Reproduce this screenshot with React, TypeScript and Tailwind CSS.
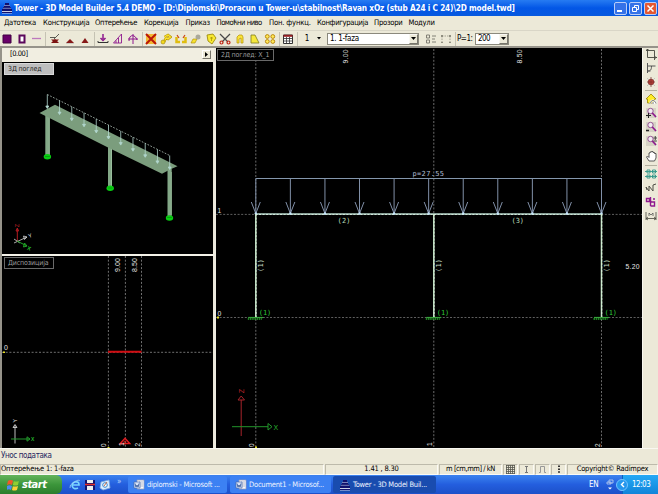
import React from "react";

const UI = "font-['DejaVu_Sans_Condensed','DejaVu_Sans',sans-serif]";

function Icon({ children, w = 12 }: { children: React.ReactNode; w?: number }) {
  return (
    <svg width={w} height={12} viewBox={`0 0 ${w} 12`} fill="none" className="block shrink-0">
      {children}
    </svg>
  );
}

function Sep({ className = "w-[3px]" }: { className?: string }) {
  return (
    <div className={`${className} flex h-[14px] justify-center`}>
      <div className="h-full w-px bg-[#c5c2b3]" />
    </div>
  );
}

const menu: [string, string, string][] = [
  ["Датотека", "w-[39px]", "tracking-[-0.3px]"],
  ["Конструкција", "w-[52px]", "tracking-[-0.2px]"],
  ["Оптерећење", "w-[49px]", "tracking-[-0.34px]"],
  ["Корекција", "w-[41.5px]", "tracking-[-0.27px]"],
  ["Приказ", "w-[31px]", "tracking-[-0.25px]"],
  ["Помоћни ниво", "w-[52.5px]", "tracking-[-0.5px]"],
  ["Пон. функц.", "w-[48px]", "tracking-[-0.15px]"],
  ["Конфигурација", "w-[57px]", "tracking-[-0.3px]"],
  ["Прозори", "w-[34.5px]", "tracking-[-0.25px]"],
  ["Модули", "w-[30px]", "tracking-[-0.25px]"],
];

const P = "#8e188e";
const toolbarGroups: React.ReactNode[][] = [
  [
    <path d="M2 2h8v8H2z" fill="#690069" stroke="#400040" />,
    <path d="M3.500 2.500h5v7h-5z" fill="#fff" stroke="#5b075b" strokeWidth="2" />,
    <path d="M2 5.500h9" stroke="#bd78bd" strokeWidth="1.300" />,
  ],
  [
    <><path d="M1 4.500h6M5 6l5-5" stroke="#5c5c54" /><path d="M2 6.500h8L6 10z" fill="#7c1212" /><path d="M6 6l4 4H2z" fill="#7c1212" /></>,
    <><path d="M6 6l4 4H2z" fill="#861818" /><path d="M2 10.500h8" stroke="#aaa" strokeWidth=".5" /></>,
    <path d="M6 5l3.500 5h-7z" fill="#861818" />,
  ],
  [
    <><path d="M6 1v5M3.500 5L6 7.500 8.500 5" stroke={P} strokeWidth="1.500" /><path d="M1 8v1.500h10V8" stroke="#333" /></>,
    <path d="M1.500 10h8V1zM4 10V7.500M6.500 10V5" stroke={P} strokeWidth=".9" />,
    <><path d="M6 1v10M1 6h10" stroke={P} /><path d="M2 8c0-8 7-6 8-1" stroke={P} /></>,
  ],
  [
    <><path d="M1 1h10v10H1z" fill="#f5b832" /><path d="M1 1l10 10M11 1L1 11" stroke="#b91608" strokeWidth="2" /></>,
    <><path d="M4.500 4L8 2l2.500 2L8 6 6 5 4 9" stroke="#b69700" strokeWidth="2.500" /><path d="M4.500 4L8 2l2.500 2L8 6 6 5 4 9" stroke="#ffe52d" strokeWidth="1.200" /><circle cx="3" cy="9" r="2" fill="#f2d81e" stroke="#8d7000" strokeWidth=".5" /></>,
    <><path d="M1.500 4v5h3.500M10.500 4v5H7" stroke="#e0bd10" strokeWidth="2.500" /><path d="M2 2l2 3M10 2L8 5" stroke="#cb4410" strokeWidth="1.200" /></>,
    <><path d="M1 10l2-4h4l-2 4z" fill="#f7e12f" stroke="#a58800" strokeWidth=".6" /><circle cx="8" cy="4" r="2.500" fill="#aaa99a" /></>,
    <><path d="M2 2l6-1 3 4-4 6-4-3z" fill="#f8e832" stroke="#938200" strokeWidth=".8" /><path d="M5 5h3M6.500 4v4" stroke="#a28c00" strokeWidth=".7" /></>,
    <><path d="M1 1l8 8M11 1L3 9" stroke="#484848" strokeWidth="1.200" /><circle cx="2.500" cy="9.500" r="1.500" stroke="#c22314" strokeWidth="1.200" /><circle cx="9.500" cy="9.500" r="1.500" stroke="#c22314" strokeWidth="1.200" /></>,
    <path d="M3 10V4l2-2h3l1 2v6H7V5L5 6v4z" fill="#fae43a" stroke="#b49100" strokeWidth=".7" />,
    <path d="M2 10V2h4l4 8z" fill="#f6e83c" stroke="#7d7a20" strokeWidth=".8" />,
    <g fill="#ffe958" stroke="#b27d00" strokeWidth=".9"><circle cx="3.300" cy="3.500" r="1.900" /><circle cx="8.800" cy="3.500" r="1.900" /><circle cx="3.300" cy="8.500" r="1.900" /><circle cx="8.800" cy="8.500" r="1.900" /></g>,
  ],
  [
    <><path d="M1.500 2h9v8.500h-9z" fill="#fff" stroke="#333" /><path d="M1.500 2.800h9" stroke="#941d20" strokeWidth="2" /><path d="M1.500 5.500h9M1.500 8h9M4.500 4v6M7.500 4v6" stroke="#333" strokeWidth=".8" /></>,
  ],
];

function ToolGroup({ items, cell }: { items: React.ReactNode[]; cell: string }) {
  return (
    <div className="flex">
      {items.map((it, i) => (
        <div key={i} className={`${cell} flex justify-center`}>
          <Icon>{it}</Icon>
        </div>
      ))}
    </div>
  );
}

const glass = (
  <>
    <path d="M1 1h10v10H1z" fill="#d6d3c5" />
    <circle cx="5.500" cy="4" r="2.700" fill="#f3eef2" stroke="#8c448c" strokeWidth=".9" />
    <path d="M7.300 6L11 10" stroke={P} strokeWidth="1.700" />
  </>
);

const sideIcons: React.ReactNode[] = [
  <path d="M2.500 1v8.500H12M1 2.500h8.500V12M1.500 2l1-1 1 1M10.500 8.500l1 1-1 1" stroke="#45453d" strokeWidth=".9" />,
  <path d="M2.500 1v10M2.500 4h8M2.500 9c3 0 4-1 4-5M2.500 9h3" stroke="#555" strokeWidth="1" />,
  <><path d="M2 2l8 8M10 2L2 10" stroke="#aaa" strokeWidth=".6" /><circle cx="6" cy="6" r="2.800" fill="#be4138" stroke="#802c28" strokeWidth=".8" /><path d="M6 1v10M2 6h8" stroke="#762d28" strokeWidth=".7" /></>,
  <><path d="M1 6l5-5 5 5H9.500v4H2.500V6z" fill="#ffec26" stroke="#958300" strokeWidth=".8" /><path d="M5 10.500c1-4 5-4 6 0M7 10h3" stroke="#fff" strokeWidth="1.800" /><path d="M5 10.500c1-4 5-4 6 0M8 9v2" stroke="#555" strokeWidth=".8" /></>,
  <>{glass}<path d="M1 8.500h5M3.500 6v5" stroke="#222" strokeWidth="1" /></>,
  <>{glass}<path d="M1 9.500h3" stroke="#222" strokeWidth="1.500" /></>,
  <>{glass}<path d="M8.500 3H12M10.300 1v4M8.500 6H12" stroke="#333" strokeWidth=".8" /></>,
  <path d="M4 11L1.500 7l1-1L4 7.500V3h1V2h1.500V1.500H8V2.500h1.500v1H11V8l-1.500 3z" fill="#fff" stroke="#484848" strokeWidth=".9" />,
  <path d="M2 2h3v3H2zM7.500 2h3v3h-3zM2 7h3v3H2zM7.500 7h3v3h-3zM0 3.500h12M0 8.500h12" stroke="#30968a" strokeWidth=".9" />,
  <path d="M1 5l3 4V4l4 5V3l3-1M1 5l1 3" stroke="#4e4e46" strokeWidth="1" />,
  <path d="M1.500 2.500h3v3h-3zM5.500 1v9M5.500 6h4v4h-4M4.500 5.500h2M8 3h2" stroke={P} strokeWidth="1.400" />,
  <><path d="M1 2v8M11 2v8M1 8.500h10M3 7L1 8.500 3 10M9 7l2 1.500L9 10" stroke="#48483f" strokeWidth=".8" /><path d="M4 6V3l2 2 2-2v3" stroke="#555" strokeWidth=".8" /></>,
];

const gap = [0, 2, 2, 5, 2, 2, 2, 3, 6, 2, 2, 2];

function SideBar() {
  return (
    <div className="flex w-[16px] shrink-0 flex-col items-center border-l border-[#f8f7ef] bg-[#ece9d8]">
      {sideIcons.map((ic, i) => (
        <React.Fragment key={i}>
          {gap[i] >= 5 ? (
            <div className="flex w-[12px] flex-col justify-center" style={{ height: gap[i] }}>
              <div className="h-px bg-[#b4b1a1]" />
            </div>
          ) : (
            <div style={{ height: gap[i] }} />
          )}
          <Icon>{ic}</Icon>
        </React.Fragment>
      ))}
    </div>
  );
}

function View3D() {
  return (
    <svg width="211" height="192" viewBox="2 62 211 192" className="block bg-black">
      <g fill="#83a887">
        <path d="M45.300 115h4.400v41h-4.400zM108 145h4v43h-4zM167.500 168h4.200v48h-4.200z" />
      </g>
      <path d="M49.300 116v39M111.500 146v40M171.300 172v43" stroke="#a5c9a8" strokeWidth=".7" />
      <path d="M39.500 113L55 104.800 177.500 166.300 170 169.500 162 173.800 109 148z" fill="#7b9d7d" />
      <path d="M47.300 94.500L169.700 155.500" stroke="#b5c4bb" strokeWidth=".8" strokeDasharray="1.700 1.500" />
      {Array.from({ length: 11 }, (_, i) => {
        const x = 47.3 + i * 12.24;
        const y = 94.5 + i * 6.1;
        return (
          <g key={i} stroke="#b3d7ce" strokeWidth=".8">
            <path d={`M${x} ${y}v13`} />
            <path d={`M${x - 1.5} ${y + 11.5}l1.500 2.500 1.500-2.500z`} fill="#aed6ce" />
          </g>
        );
      })}
      <g fill="#08ce12">
        <ellipse cx="47.400" cy="156.800" rx="3.700" ry="2.700" />
        <ellipse cx="110.200" cy="188.300" rx="3.700" ry="2.700" />
        <ellipse cx="169.500" cy="218" rx="3.700" ry="2.700" />
      </g>
      <path d="M45 156.500h5M108 188h4.500M167 217.500h5" stroke="#08970d" strokeWidth=".8" />
      <path d="M17.300 242v-13M16 231l1.300-3 1.300 3z" stroke="#b31b21" strokeWidth="1" fill="none" />
      <path d="M14 243l13-6M23.500 236l3.500 1-2.500 2.500zM14 239l6 4" stroke="#d5d5d5" strokeWidth=".8" fill="none" />
      <path d="M17 241l10 5M24.500 243l2.500 3-3.500 1z" stroke="#20a527" strokeWidth="1" fill="none" />
      <g fontFamily="Liberation Sans, sans-serif" fontSize="5.500">
        <text transform="translate(19 227.300) rotate(-90)" fill="#d2262c">Z</text>
        <text x="28" y="237.500" fill="#e1e1e1" transform="rotate(-20 30 235)">Y</text>
        <text x="27.500" y="250.500" fill="#22b42a" fontWeight="bold" transform="rotate(20 30 248)">X</text>
      </g>
    </svg>
  );
}

function ViewPlan() {
  return (
    <svg width="211" height="192" viewBox="2 256 211 192" className="block bg-black">
      <g stroke="#8d8d8d" strokeWidth=".8" strokeDasharray="2 1.700">
        <path d="M108.400 256v192M125.400 256v192M141.500 256v192" />
        <path d="M2 352.300h211" />
      </g>
      <path d="M108 351.800h33.500" stroke="#d00d12" strokeWidth="1.900" />
      <path d="M120.200 443.500h9.600l-4.800-5.300z" stroke="#e21b20" strokeWidth="1.400" fill="none" />
      <path d="M123.500 441.500h3M125 440v3" stroke="#ce2020" strokeWidth=".7" />
      <path d="M15 443.500v-18M13 427.500l2-3 2 3z" stroke="#d1d1d1" strokeWidth=".9" fill="none" />
      <path d="M11 439h19M27 436.800l3 2.200-3 2.200z" stroke="#239a2c" strokeWidth="1" fill="none" />
      <path d="M3 351.500h2v1.500H3zM107.500 447h2v1h-2z" fill="#e8df26" />
      <g fontFamily="Liberation Sans, sans-serif" fontSize="7" fill="#e6e6e6">
        <text x="4" y="350">0</text>
        <text x="31" y="441" fontSize="5" fill="#23b12a" fontWeight="bold">X</text>
        <text transform="translate(17 422.500) rotate(-90)" fontSize="5">Y</text>
        <text transform="translate(120 272) rotate(-90)" textLength="14">9.00</text>
        <text transform="translate(136.500 272) rotate(-90)" textLength="14">8.50</text>
        <text transform="translate(106 447) rotate(-90)" fontSize="6.500">0</text>
        <text transform="translate(123.500 446) rotate(-90)" fontSize="6.500">1</text>
        <text transform="translate(139.800 446.500) rotate(-90)" fontSize="6.500">2</text>
      </g>
    </svg>
  );
}

const columns = [255.8, 433.8, 601.5];

function ViewFrame() {
  return (
    <svg width="426" height="400" viewBox="216 48 426 400" className="block bg-black">
      <g stroke="#777" strokeWidth=".9" strokeDasharray="2 1.600">
        {columns.map((x) => (
          <path key={x} d={`M${x} 49v399`} />
        ))}
        <path d="M216 214.400h426M216 317.500h426" strokeWidth=".8" />
      </g>
      <path d="M255.800 178.500H602" stroke="#8497ad" strokeWidth="1" />
      <g stroke="#8190a8" strokeWidth="1" fill="none">
        {Array.from({ length: 11 }, (_, i) => {
          const x = 255.8 + i * 34.57;
          return <path key={i} d={`M${x} 178.500v35M${x - 4.5} 202l4.500 11.500 4.500-11.500`} />;
        })}
      </g>
      <path d="M255.500 214H602" stroke="#b5d5c8" strokeWidth="1.500" />
      <path d="M255.500 214.500H602" stroke="#e9fff1" strokeWidth=".7" strokeDasharray="2 1.500" />
      {Array.from({ length: 11 }, (_, i) => (
        <circle key={i} cx={255.8 + i * 34.57} cy="213.500" r="1.200" fill="#c6e5fc" />
      ))}
      {columns.map((x) => (
        <g key={x}>
          <path d={`M${x} 214v103`} stroke="#c4e6c7" strokeWidth="1.500" />
          <path d={`M${x + 0.4} 214v103`} stroke="#f5fff5" strokeWidth=".6" strokeDasharray="2 1.500" />
          <path d={`M${x - 7.5} 317.500h15`} stroke="#36a43a" strokeWidth="1.200" />
          <path d={`M${x - 8} 319h14`} stroke="#28a52d" strokeWidth="1.400" strokeDasharray="1.500 .7" />
        </g>
      ))}
      <g fontFamily="DejaVu Sans Mono, Liberation Mono, monospace" fontSize="7">
        <text x="412.500" y="176" textLength="31.500" fill="#b0bdd3">p=27.55</text>
        <text x="337.500" y="222.500" textLength="13" fill="#b9dcb9">(2)</text>
        <text x="511.500" y="222.500" textLength="12.500" fill="#b9dcb9">(3)</text>
        {columns.map((x) => (
          <React.Fragment key={x}>
            <text transform={`translate(${x + 7.6} 272) rotate(-90)`} textLength="13" fill="#c6dcc6">(1)</text>
            <text x={x + 3} y="315.300" textLength="12.500" fill="#2dc837">(1)</text>
          </React.Fragment>
        ))}
      </g>
      <g fontFamily="Liberation Sans, sans-serif" fontSize="6.800" fill="#e6e6e6">
        <text transform="translate(348 63.500) rotate(-90)" textLength="14">9.00</text>
        <text transform="translate(521.500 63.500) rotate(-90)" textLength="14">8.50</text>
        <text x="217.500" y="212.500" fontSize="6.500">1</text>
        <text x="217.500" y="315.500">0</text>
        <text x="625.500" y="269" textLength="14">5.20</text>
        <text transform="translate(254 447) rotate(-90)" fontSize="6.500">0</text>
        <text transform="translate(431.500 446) rotate(-90)" fontSize="6.500">1</text>
        <text transform="translate(600 447) rotate(-90)" fontSize="6.500">2</text>
        <text x="273.500" y="429.500" fontSize="7" fill="#28b42f">X</text>
        <text transform="translate(244.300 393.300) rotate(-90)" fontSize="7" fill="#c1252b">Z</text>
      </g>
      <path d="M241.200 436v-36M238 400h6.500l-3.300-4z" stroke="#a6242a" strokeWidth="1" fill="none" />
      <path d="M232 426.700h36M268 423.500v6.500l4-3.300z" stroke="#22942b" strokeWidth="1" fill="none" />
      <path d="M217 316.500h2v2h-2zM255 446.500h2v1.500h-2z" fill="#e5de26" />
    </svg>
  );
}

function ViewLabel({ text, active, className }: { text: string; active?: boolean; className: string }) {
  return (
    <div
      className={`absolute flex h-[12px] items-center border pl-[3px] text-[7px] leading-none tracking-[-0.12px] whitespace-nowrap ${
        active ? "border-[#d9d9d9] bg-[#bebebe] text-[#222]" : "border-[#696969] bg-black text-[#9d9d9d]"
      } ${className}`}
    >
      {text}
    </div>
  );
}

function Tower({ s = 12 }: { s?: number }) {
  return (
    <svg width={s} height={s} viewBox="0 0 12 12" className="block shrink-0">
      <path d="M1 8h10v3.500H1z" fill="#c9cfe6" />
      <path d="M4 1h4v2h1v2h1v2h1v2H1V7h1V5h1V3h1zM1 10h10v1H1z" fill="#10106e" />
      <path d="M3 3.500h6M2 6.300h8" stroke="#a9b2d8" strokeWidth=".7" />
    </svg>
  );
}

function DocIcon() {
  return (
    <Icon>
      <path d="M4 1h7v9H4z" fill="#f7f8fc" stroke="#999fb5" strokeWidth=".7" />
      <path d="M6 3h4M7 5h3M7 7h3" stroke="#99a4bd" strokeWidth=".7" />
      <path d="M1 3h6v6H1z" fill="#dae5f9" stroke="#496aab" strokeWidth=".7" />
      <path d="M2 4.500L3 8l1-2 1 2 1-3.500" stroke="#385c9d" strokeWidth=".9" />
    </Icon>
  );
}

function TitleBar() {
  const btn = "flex h-[13px] w-[13px] items-center justify-center rounded-[2px] border border-[#b9cdf8]";
  return (
    <div className="flex h-[16px] shrink-0 items-center bg-linear-to-b from-[#267bf2] via-[#0356e6] to-[#0759df] pl-px text-white">
      <Tower />
      <div className="ml-px w-[514px] text-[8.2px] leading-none font-bold tracking-[-0.165px] whitespace-nowrap">
        Tower - 3D Model Builder 5.4 DEMO - [D:\Diplomski\Proracun u Tower-u\stabilnost\Ravan xOz (stub A24 i C 24)\2D model.twd]
      </div>
      <div className="ml-auto flex gap-[2px] pr-px">
        <div className={`${btn} bg-[#3572e8]`}><div className="mt-[5px] mr-[3px] h-[2px] w-[5px] bg-white" /></div>
        <div className={`${btn} bg-[#3572e8]`}>
          <svg width="9" height="9" viewBox="0 0 9 9" fill="none" stroke="white"><path d="M3.500 3V1.500h4v4H6M1.500 3.500h4v4h-4z" /></svg>
        </div>
        <div className={`${btn} bg-[#e35832]`}>
          <svg width="9" height="9" viewBox="0 0 9 9" stroke="white" strokeWidth="1.500"><path d="M1.500 1.500l6 6M7.500 1.500l-6 6" /></svg>
        </div>
      </div>
    </div>
  );
}

function DropArrow() {
  return (
    <div className="flex h-[10px] w-[9px] items-center justify-center border border-[#f9f8f3] border-r-[#77756b] border-b-[#77756b] bg-[#ece9d8]">
      <svg width="5" height="3" viewBox="0 0 5 3"><path d="M0 0h5L2.500 3z" /></svg>
    </div>
  );
}

function ToolBar() {
  const field = "flex h-[12px] items-center justify-between border border-[#8b897d] bg-white pl-[2px]";
  return (
    <div className="flex h-[16px] shrink-0 items-center border-t border-[#d9d6c7] text-[8px] leading-none">
      <ToolGroup items={toolbarGroups[0]} cell="w-[14.5px]" />
      <Sep className="w-[4px]" />
      <ToolGroup items={toolbarGroups[1]} cell="w-[15px]" />
      <Sep />
      <ToolGroup items={toolbarGroups[2]} cell="w-[15px]" />
      <Sep />
      <ToolGroup items={toolbarGroups[3]} cell="w-[14.9px]" />
      <Sep />
      <ToolGroup items={toolbarGroups[4]} cell="w-[15px]" />
      <Sep className="w-[4px]" />
      <div className="w-[15px] text-center">1</div>
      <div className="flex w-[12.5px] pl-[2.5px]">
        <svg width="4" height="3" viewBox="0 0 4 3"><path d="M0 0h4L2 2.500z" /></svg>
      </div>
      <div className={`${field} w-[92px]`}><span className="tracking-[-0.3px]">1. 1-faza</span><DropArrow /></div>
      <div className="ml-[6px] flex gap-[3px]">
        <Icon><path d="M1.500 2h3v3h-3zM1.500 7h3v3h-3zM7 3h4M7 6h3M7 9h4" stroke="#77756b" strokeWidth=".9" /></Icon>
        <Icon><path d="M2 3v7M10 3v7M2 3h8" stroke="#a5a394" strokeDasharray="1.500 1" /><path d="M1 2h2v2H1zM9 2h2v2H9zM1 9h2v1H1zM9 9h2v1H9z" fill="#8f8d7f" /></Icon>
      </div>
      <Sep className="ml-px w-[4px]" />
      <div className="w-[18px] tracking-[-0.5px]">P=1:</div>
      <div className={`${field} w-[34px]`}><span className="tracking-[-0.6px]">200</span><DropArrow /></div>
    </div>
  );
}

function StatusCell({ className, children }: { className: string; children?: React.ReactNode }) {
  return (
    <div className={`flex h-[11px] items-center overflow-hidden whitespace-nowrap border border-[#bdbaab] border-r-[#fbfaf5] border-b-[#fbfaf5] ${className}`}>
      {children}
    </div>
  );
}

function TaskBar() {
  const task = "flex h-[17px] items-center gap-[2px] rounded-[2px] text-[7.5px] whitespace-nowrap tracking-[-0.22px] text-[#edf3ff]";
  return (
    <div className="flex h-[19px] shrink-0 items-center bg-linear-to-b from-[#3c83ef] via-[#245ede] to-[#1c50c9] leading-none text-white">
      <div className="flex h-full w-[62px] items-center gap-[3px] rounded-r-[6px] bg-linear-to-b from-[#63b45c] via-[#3c963b] to-[#2b7d2c] pl-[7px]">
        <svg width="12" height="12" viewBox="0 0 12 12">
          <path d="M1 2q2-2 5-.4L5 6Q3 4.500 0 6z" fill="#f25828" />
          <path d="M6.800 2q2 1 5 0L11 6Q8 7 5.800 6z" fill="#90ce32" />
          <path d="M0 7q2-1.500 5 0l-1 4Q2 9.700-.5 11z" fill="#4e8af2" />
          <path d="M5.800 7.200Q8 8 11 7l-1 4q-3 1.200-5 0z" fill="#fccf36" />
        </svg>
        <span className="text-[11px] font-bold italic tracking-[-0.5px]">start</span>
      </div>
      <div className="flex w-[65px] items-center gap-[3px] pl-[7px]">
        <Icon><path d="M9 9c-6 3-8-5-3-6 4-1 4 2 4 3H4" stroke="#79d4ff" strokeWidth="1.700" /><path d="M1 9Q0 6 5 3t6-1" stroke="#9fd3f8" strokeWidth=".8" /></Icon>
        <Icon><path d="M1 1h10v10H1z" fill="#111570" /><path d="M3 1h6v3H3zM3 7h6v4H3z" fill="#eee" /><path d="M1 5.500h10" stroke="#e63127" strokeWidth="1.500" /></Icon>
        <Icon><path d="M2 3l8-2 1 8-7 2-3-2z" fill="#dceeff" stroke="#7eaadc" strokeWidth=".8" /><circle cx="6" cy="6" r="2.300" fill="#fff" stroke="#3889cd" /><path d="M5 7l3-4" stroke="#c06b49" /></Icon>
        <span className="mb-[5px] ml-[3px] text-[8px] text-[#b9d3ff]">»</span>
      </div>
      <div className={`${task} ml-px w-[99px] bg-[#3c81f3] pl-[5px]`}><DocIcon /><span>diplomski - Microsoft ...</span></div>
      <div className={`${task} ml-[3px] w-[101px] bg-[#3c81f3] pl-[5px]`}><DocIcon /><span>Document1 - Microsof...</span></div>
      <div className={`${task} ml-[2px] w-[103px] bg-[#194caf] pl-[6px]`}><Tower /><span>Tower - 3D Model Buil...</span></div>
      <div className="ml-auto flex h-full items-center text-[8px]">
        <span className="w-[17px] tracking-[-0.3px]">EN</span>
        <svg width="8" height="12" viewBox="0 0 8 12" fill="none"><path d="M3 1h4v3H3zM1 3h4v2H1z" stroke="#bfd0ef" strokeWidth=".8" /><path d="M2 8.500h4L4 10.500z" fill="#fff" /></svg>
        <div className="z-10 ml-[2px] -mr-[6px] flex h-[12px] w-[12px] items-center justify-center rounded-full border border-[#71c3ff] bg-[#2596ed]">
          <svg width="5" height="7" viewBox="0 0 5 7" fill="none"><path d="M4 1L1.500 3.500 4 6" stroke="#fff" strokeWidth="1.400" /></svg>
        </div>
        <div className="flex h-full w-[36px] items-center border-l border-[#0a62bc] bg-linear-to-b from-[#25a9f6] to-[#1184d9] pl-[9px] tracking-[-0.5px]">12:03</div>
      </div>
    </div>
  );
}

export default function App() {
  return (
    <div className={`flex h-[494px] w-[658px] flex-col overflow-hidden bg-[#ece9d8] text-black ${UI}`}>
      <TitleBar />
      <div className="flex h-[14px] shrink-0 items-center pl-[4px] text-[7.6px] leading-none whitespace-nowrap">
        {menu.map(([label, w, tr]) => (
          <div key={label} className={`${w} ${tr} shrink-0`}>{label}</div>
        ))}
      </div>
      <ToolBar />
      <div className="h-[2px] shrink-0 bg-[#96938a]" />
      <div className="flex h-[400px] shrink-0">
        <div className="flex w-[214px] shrink-0 flex-col border-l-2 border-[#96938a]">
          <div className="flex h-[14px] w-[212px] items-center justify-between bg-[#f1eee1] pr-[3px] pl-[8px] text-[7.5px] leading-none">
            <span className="-mt-[2px] tracking-[-0.45px]">[0.00]</span>
            <div className="-mt-[2px] flex h-[9px] w-[9px] items-center justify-center border border-white border-r-[#77756b] border-b-[#77756b] bg-[#ece9d8]">
              <svg width="3" height="5" viewBox="0 0 3 5"><path d="M0 0v5l3-2.500z" /></svg>
            </div>
          </div>
          <div className="relative h-[192px]"><View3D /><ViewLabel active text="3Д поглед" className="top-[1px] left-[2px] w-[50px]" /></div>
          <div className="h-[2px] bg-[#f4f2e8]" />
          <div className="relative h-[192px]"><ViewPlan /><ViewLabel text="Диспозиција" className="top-[1px] left-[2px] w-[50px]" /></div>
        </div>
        <div className="w-[2px] bg-[#eceadf]" />
        <div className="relative w-[426px] shrink-0"><ViewFrame /><ViewLabel text="2Д поглед: X_1" className="top-[1px] left-[1px] w-[57px]" /></div>
        <SideBar />
      </div>
      <div className="flex h-[15px] shrink-0 items-center border-t border-[#f9f8f1] pl-px text-[8px] leading-none tracking-[-0.4px] text-[#26265e]">Унос података</div>
      <div className="flex h-[12px] shrink-0 items-center gap-px text-[7.5px] leading-none tracking-[-0.2px]">
        <StatusCell className="w-[324px]">Оптерећење 1: 1-faza</StatusCell>
        <StatusCell className="w-[113px] justify-center">1.41 , 8.30</StatusCell>
        <StatusCell className="w-[63px] justify-center tracking-[-0.45px]">m [cm,mm] / kN</StatusCell>
        <StatusCell className="w-[15px] justify-center"><svg width="9" height="9" viewBox="0 0 9 9" stroke="#55554e" strokeWidth=".8"><path d="M.5 0v9M2.500 0v9M4.500 0v9M6.500 0v9M8.500 0v9M0 .5h9M0 2.500h9M0 4.500h9M0 6.500h9M0 8.500h9" /></svg></StatusCell>
        <StatusCell className="w-[15px] justify-center"><svg width="5" height="7" viewBox="0 0 5 7" stroke="#777" fill="none"><path d="M1 .5h3M2.500 1v5M1 6.500h3" /></svg></StatusCell>
        <StatusCell className="w-[15px] justify-center"><svg width="7" height="7" viewBox="0 0 7 7" stroke="#999" fill="none"><path d="M0 6.500h1.500v-6h4v6H7" /></svg></StatusCell>
        <StatusCell className="w-[15px] justify-center"><svg width="4" height="8" viewBox="0 0 4 8" stroke="#333" fill="none"><path d="M2 0v2M2 3v2M2 6v2M1 1.500h2M1 4.500h2M1 7h2" /></svg></StatusCell>
        <StatusCell className="flex-1 justify-center">Copyright© Radimpex</StatusCell>
      </div>
      <TaskBar />
    </div>
  );
}
